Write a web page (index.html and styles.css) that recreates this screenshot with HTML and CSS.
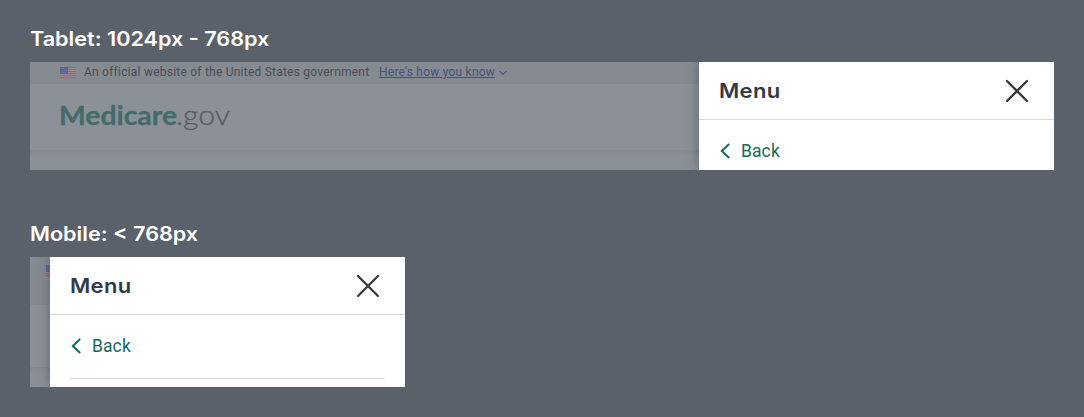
FILE: index.html
```html
<!DOCTYPE html>
<html lang="en">
<head>
<meta charset="utf-8">
<title>Menu states</title>
<link rel="stylesheet" href="styles.css">
</head>
<body>
<svg class="defs" aria-hidden="true">
  <symbol id="flag" viewBox="0 0 16 11">
    <rect width="16" height="11" fill="#9a8c92"/>
    <path d="M0 .5h16M0 2.5h16M0 4.5h16M0 6.5h16M0 8.5h16M0 10.5h16" stroke="#a0666a"/>
    <rect width="8" height="7" fill="#5a6592"/>
    <path d="M1 1.5h6M2 3.5h5M1 5.5h6" stroke="#6c76a0" stroke-dasharray="1 1"/>
  </symbol>
  <symbol id="close" viewBox="0 0 24 24"><path d="M2 2 22 22M22 2 2 22" fill="none" stroke="#323a45" stroke-width="2.3" stroke-linecap="round"/></symbol>
  <symbol id="back" viewBox="0 0 10 16"><path d="M9.200 1 1.800 8l7.400 7" fill="none" stroke="#146a5d" stroke-width="2"/></symbol>
</svg>
<main class="page">
  <section>
    <h2 class="heading">Tablet: 1024px - 768px</h2>
    <div class="screen tablet">
      <div class="site">
        <div class="banner">
          <svg class="flag"><use href="#flag"/></svg>
          <span class="official">An official website of the United States government</span>
          <a class="know">Here’s how you know</a>
          <svg class="chevron" viewBox="0 0 8 6"><path d="M.5 1 4 4.400 7.500 1" fill="none" stroke="#505c76" stroke-width="1.300"/></svg>
        </div>
        <div class="header">
          <svg class="logo" viewBox="0 0 180 40">
            <text class="logo-bold" x="-1" y="27" textLength="118" lengthAdjust="spacingAndGlyphs">Medicare</text>
            <text class="logo-light" x="116" y="27" textLength="54" lengthAdjust="spacingAndGlyphs">.gov</text>
          </svg>
        </div>
        <div class="below"></div>
      </div>
      <aside class="drawer">
        <div class="drawer-head"><span class="menu">Menu</span><svg class="close"><use href="#close"/></svg></div>
        <div class="drawer-body"><a class="back"><svg class="arrow"><use href="#back"/></svg><span>Back</span></a></div>
      </aside>
    </div>
  </section>
  <section class="second">
    <h2 class="heading">Mobile: &lt; 768px</h2>
    <div class="screen mobile">
      <div class="site">
        <div class="banner"><svg class="flag"><use href="#flag"/></svg></div>
        <div class="header"></div>
        <div class="below"></div>
      </div>
      <aside class="drawer">
        <div class="drawer-head"><span class="menu">Menu</span><svg class="close"><use href="#close"/></svg></div>
        <div class="drawer-body"><a class="back"><svg class="arrow"><use href="#back"/></svg><span>Back</span></a></div>
      </aside>
    </div>
  </section>
</main>
</body>
</html>
```
FILE: styles.css
```css
* { box-sizing: border-box; }
body { margin: 0; background: #5b616b; font-family: Roboto, sans-serif; }
svg { display: block; flex: none; }
.defs { width: 0; height: 0; position: absolute; }
.page { height: 417px; padding: 24px 30px 0; overflow: hidden; }
.second { margin-top: 49px; }
.heading { width: max-content; margin: 0 0 8px; height: 30px; font: 600 20px/30px Inter, sans-serif; color: #fff; white-space: nowrap; transform: scaleX(1.081); transform-origin: 0 0; }
.screen { display: flex; overflow: hidden; }
.tablet { width: 1024px; height: 108px; }
.mobile { width: 375px; height: 130px; }
.site { flex: 1; min-width: 0; display: flex; flex-direction: column; overflow: hidden; background: #8c9199; }
.banner { display: flex; flex: none; height: 22px; background: #868b92; padding: 5px 0 0 30px; white-space: nowrap; font-size: 12px; line-height: 14px; color: #494d55; }
.flag { width: 16px; height: 11px; }
.official { margin: -2px 0 0 8px; width: 285px; letter-spacing: 0.23px; }
.know { margin: -2px 0 0 10px; width: 116px; color: #46536f; text-decoration: underline; text-underline-offset: 1px; letter-spacing: 0.23px; }
.chevron { width: 8px; height: 6px; margin: 3px 0 0 4px; }
.header { flex: none; height: 66px; padding: 14px 0 0 30px; }
.below { flex: 1; background: linear-gradient(#858a92, #8c9199 7px); }
.logo { width: 180px; height: 40px; overflow: visible; }
.logo-bold { font: 700 26px Lato, sans-serif; fill: #446b6a; stroke: #446b6a; stroke-width: .3px; }
.logo-light { font: 300 28px Lato, sans-serif; fill: #575c64; stroke: #575c64; stroke-width: .3px; }
.mobile .banner { height: 48px; padding: 8px 0 0 16px; }
.mobile .header { height: 62px; }
.drawer { width: 355px; flex: none; background: #fff; box-shadow: 0 0 12px rgba(50, 58, 69, .5); position: relative; }
.drawer-head { height: 58px; border-bottom: 1px solid #d6d7d9; display: flex; align-items: center; justify-content: space-between; padding: 0 25px 0 20px; }
.menu { font: 600 20px/30px Inter, sans-serif; letter-spacing: 0.3px; color: #323a45; transform: scaleX(1.1); transform-origin: 0 0; }
.close { width: 24px; height: 24px; }
.drawer-body { margin: 0 20px; height: 64px; padding-bottom: 1px; border-bottom: 1px solid #d6d7d9; display: flex; align-items: center; }
.back { display: flex; align-items: center; gap: 11px; color: #146a5d; font-size: 17.5px; line-height: 24px; letter-spacing: 0.1px; margin-left: 1px; }
.arrow { width: 10px; height: 16px; }
```
